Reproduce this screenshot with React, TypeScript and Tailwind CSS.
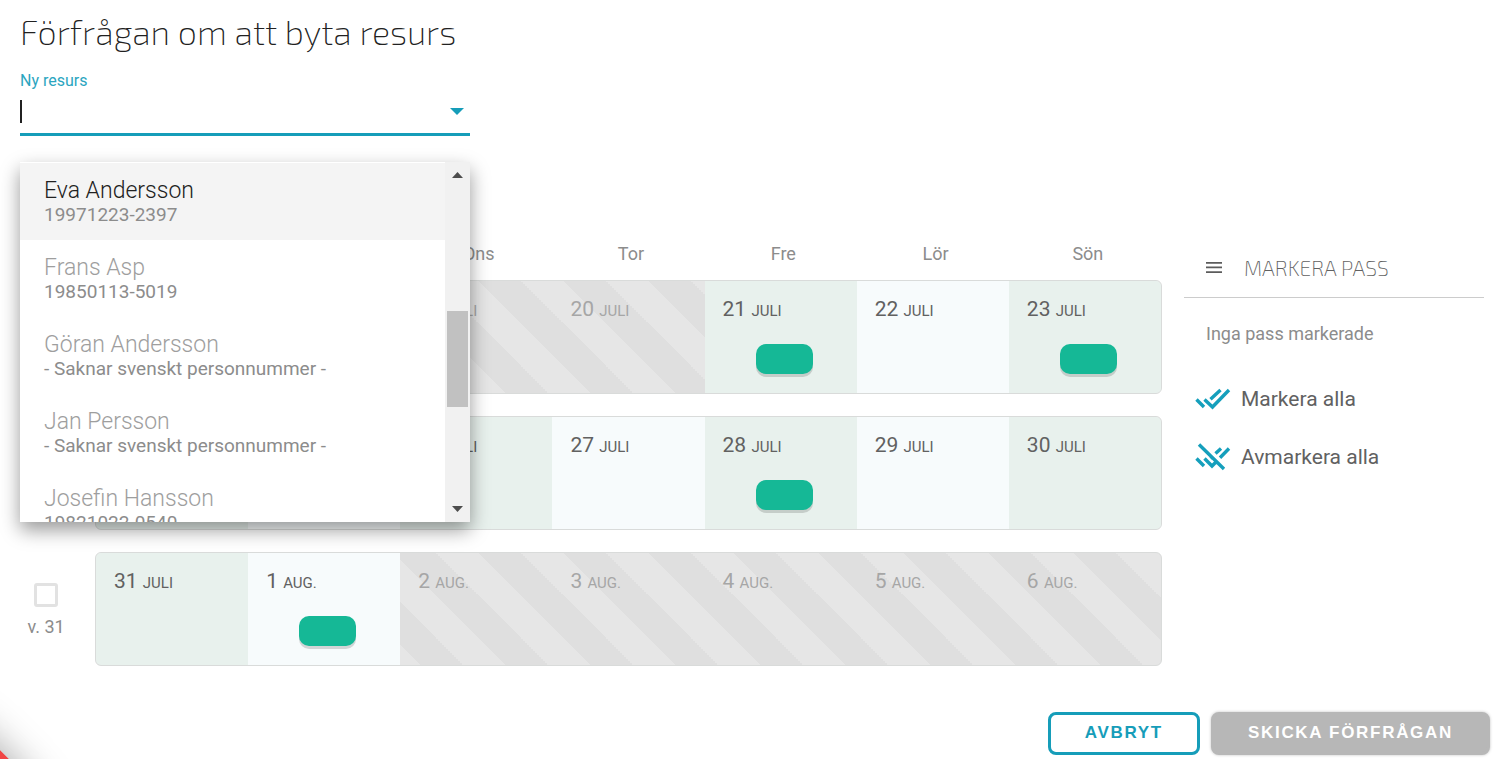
import { useState } from "react";

type Tone = "green" | "light" | "closed";

type Day = {
  date: number;
  month: string;
  tone: Tone;
  shift?: boolean;
};

type Week = {
  week: number;
  days: Day[];
};

const weekdays = ["Mån", "Tis", "Ons", "Tor", "Fre", "Lör", "Sön"];

const weeks: Week[] = [
  {
    week: 29,
    days: [
      { date: 17, month: "juli", tone: "closed" },
      { date: 18, month: "juli", tone: "closed" },
      { date: 19, month: "juli", tone: "closed" },
      { date: 20, month: "juli", tone: "closed" },
      { date: 21, month: "juli", tone: "green", shift: true },
      { date: 22, month: "juli", tone: "light" },
      { date: 23, month: "juli", tone: "green", shift: true },
    ],
  },
  {
    week: 30,
    days: [
      { date: 24, month: "juli", tone: "green" },
      { date: 25, month: "juli", tone: "light" },
      { date: 26, month: "juli", tone: "green" },
      { date: 27, month: "juli", tone: "light" },
      { date: 28, month: "juli", tone: "green", shift: true },
      { date: 29, month: "juli", tone: "light" },
      { date: 30, month: "juli", tone: "green" },
    ],
  },
  {
    week: 31,
    days: [
      { date: 31, month: "juli", tone: "green" },
      { date: 1, month: "aug.", tone: "light", shift: true },
      { date: 2, month: "aug.", tone: "closed" },
      { date: 3, month: "aug.", tone: "closed" },
      { date: 4, month: "aug.", tone: "closed" },
      { date: 5, month: "aug.", tone: "closed" },
      { date: 6, month: "aug.", tone: "closed" },
    ],
  },
];

const people = [
  { name: "Eva Andersson", id: "19971223-2397" },
  { name: "Frans Asp", id: "19850113-5019" },
  { name: "Göran Andersson", id: "- Saknar svenskt personnummer -" },
  { name: "Jan Persson", id: "- Saknar svenskt personnummer -" },
  { name: "Josefin Hansson", id: "19821022-0540" },
];

const toneClass: Record<Tone, string> = {
  green: "bg-[#e8f1ed] text-[#616161]",
  light: "bg-[#f7fbfc] text-[#616161]",
  closed: "text-[#a6a6a6]",
};

function ResourceField() {
  const [query, setQuery] = useState("");

  return (
    <div className="relative w-[450px] max-w-full">
      <label htmlFor="resource" className="block text-base leading-5 text-[#2ba5c0]">
        Ny resurs
      </label>
      <div className="flex h-[45px] items-center border-b-3 border-[#169db9] pb-0.5 pr-1.5">
        <span className="h-[23px] w-0.5 bg-[#212121]" />
        <input
          id="resource"
          type="text"
          role="combobox"
          aria-expanded="true"
          aria-controls="resource-list"
          value={query}
          onChange={(e) => setQuery(e.target.value)}
          className="min-w-0 flex-1 bg-transparent text-[22px] font-light caret-transparent outline-none"
        />
        <svg viewBox="0 0 14 7" className="h-[7px] w-[14px]" fill="#169db9">
          <path d="M0 0h14L7 7z" />
        </svg>
      </div>
      <ResourceList />
    </div>
  );
}

function ResourceList() {
  return (
    <div className="absolute left-0 top-full z-10 mt-[26px] flex h-[360px] w-full bg-white shadow-[0_8px_18px_rgba(0,0,0,0.4)]">
      <ul id="resource-list" role="listbox" className="flex-1 overflow-hidden pt-px">
        {people.map((person, index) => (
          <li
            key={person.name}
            role="option"
            aria-selected={index === 0}
            className={
              index === 0
                ? "bg-[#f4f4f4] px-6 pb-[15px] pt-3.5 text-[#212121]"
                : "px-6 pb-[15px] pt-3.5 text-[#9e9e9e]"
            }
          >
            <div className="text-[23px] font-light leading-7">{person.name}</div>
            <div className="text-[19px] leading-5 text-[#8c8c8c]">{person.id}</div>
          </li>
        ))}
      </ul>
      <div className="flex w-[25px] flex-col items-center bg-[#f1f1f1] py-2.5" aria-hidden="true">
        <svg viewBox="0 0 11 6" className="h-1.5 w-[11px]" fill="#4d4d4d">
          <path d="M5.5 0 11 6H0z" />
        </svg>
        <div className="mt-[133px] h-24 w-[21px] bg-[#c1c1c1]" />
        <svg viewBox="0 0 11 6" className="mt-auto h-1.5 w-[11px]" fill="#4d4d4d">
          <path d="M0 0h11L5.5 6z" />
        </svg>
      </div>
    </div>
  );
}

function DayCell({ day }: { day: Day }) {
  return (
    <div className={`px-[18px] pt-3.5 ${toneClass[day.tone]}`}>
      <div className="whitespace-nowrap text-[21px] leading-7">
        {day.date} <span className="text-[15px] uppercase leading-none">{day.month}</span>
      </div>
      {day.shift && (
        <button
          type="button"
          aria-label={`Pass ${day.date} ${day.month}`}
          className="ml-[33px] mt-[21px] block h-[30px] w-[57px] rounded-[10px] bg-[#15b896] shadow-[0_3px_0_rgba(0,0,0,0.15)]"
        />
      )}
    </div>
  );
}

function WeekRow({ week, days }: Week) {
  return (
    <div className="flex gap-[23px]">
      <div className="flex w-[52px] flex-col items-center pt-[31px]">
        <input
          id={`week-${week}`}
          type="checkbox"
          className="size-6 appearance-none rounded-[3px] border-3 border-[#e2e2e2] bg-white"
        />
        <label htmlFor={`week-${week}`} className="mt-2 text-lg leading-6 text-[#8c8c8c]">
          v. {week}
        </label>
      </div>
      <div className="grid h-[114px] flex-1 grid-cols-7 overflow-hidden rounded-md border border-[#d9dbda] bg-[linear-gradient(45deg,#e6e6e6_25%,#dfdfdf_25%,#dfdfdf_50%,#e6e6e6_50%,#e6e6e6_75%,#dfdfdf_75%)] bg-[length:85px_85px]">
        {days.map((day) => (
          <DayCell key={day.date} day={day} />
        ))}
      </div>
    </div>
  );
}

function SidePanel() {
  return (
    <aside className="w-[300px] shrink-0">
      <div className="flex h-14 items-center gap-[22px] border-b border-[#cccccc] pb-1 pl-[22px]">
        <svg viewBox="0 0 16 11" className="h-[11px] w-4" fill="#5c5c5c">
          <path d="M0 0h16v1.7H0zM0 4.6h16v1.7H0zM0 9.3h16V11H0z" />
        </svg>
        <h2 className="font-['Exo_2',Roboto,sans-serif] text-[21px] font-extralight text-[#616161]">
          MARKERA PASS
        </h2>
      </div>
      <p className="mt-6 pl-[22px] text-lg leading-6 text-[#8c8c8c]">Inga pass markerade</p>
      <div className="mt-[38px] flex flex-col items-start gap-7 pl-[11px] text-[21px] leading-[30px] text-[#616161]">
        <button type="button" className="flex items-center gap-2.5">
          <svg viewBox="0 0 36 30" className="h-[30px] w-9" fill="none" stroke="#159fbc" strokeWidth="3.4">
            <path d="M1.5 15.5 9 23M9.5 15.5l8 7.5 16.5-17M15.5 15.3 25.5 6" />
          </svg>
          Markera alla
        </button>
        <button type="button" className="flex items-center gap-2.5">
          <svg viewBox="0 0 36 30" className="h-[30px] w-9" fill="none" stroke="#159fbc" strokeWidth="3.4">
            <path d="M4 2.5 29 27M1.5 16.5 9 24M9.5 16.5 17 24l4-4M15.5 16.5l2-2M20.5 11.5l5.5-5M25 15.7l9-9.2" />
          </svg>
          Avmarkera alla
        </button>
      </div>
    </aside>
  );
}

export default function App() {
  return (
    <div className="min-h-screen bg-white pb-1 font-[Roboto,sans-serif]">
      <header className="px-5 pt-3">
        <h1 className="mb-[19px] font-['Exo_2',Inter,Roboto,sans-serif] text-[34px] font-extralight leading-10 text-[#212121]">
          Förfrågan om att byta resurs
        </h1>
        <ResourceField />
      </header>

      <main className="mt-[106px] flex gap-[22px] pl-5 pr-[23px]">
        <section className="min-w-0 flex-1">
          <div className="-mr-0.5 mb-3.5 grid grid-cols-7 pl-[78px] text-center text-lg leading-6 text-[#8c8c8c]">
            {weekdays.map((day) => (
              <div key={day}>{day}</div>
            ))}
          </div>
          <div className="flex flex-col gap-[22px]">
            {weeks.map((week) => (
              <WeekRow key={week.week} {...week} />
            ))}
          </div>
        </section>
        <SidePanel />
      </main>

      <footer className="mt-[46px] flex justify-end gap-[11px] pr-[17px] font-['Liberation_Sans',Arial,sans-serif] text-[17px] font-bold leading-[35px] tracking-widest">
        <button type="button" className="rounded-lg border-3 border-[#169db9] px-[34px] pb-0.5 text-[#169db9]">
          AVBRYT
        </button>
        <button
          type="button"
          disabled
          className="rounded-lg border-3 border-[#b7b7b7] bg-[#b7b7b7] px-[34px] pb-0.5 text-white shadow-[0_0_3px_rgba(0,0,0,0.25)]"
        >
          SKICKA FÖRFRÅGAN
        </button>
      </footer>

      <div className="fixed -bottom-[81px] -left-[81px] size-[100px] rotate-45 bg-[#f04444] shadow-[0_0_40px_rgba(0,0,0,0.35)]" />
    </div>
  );
}
